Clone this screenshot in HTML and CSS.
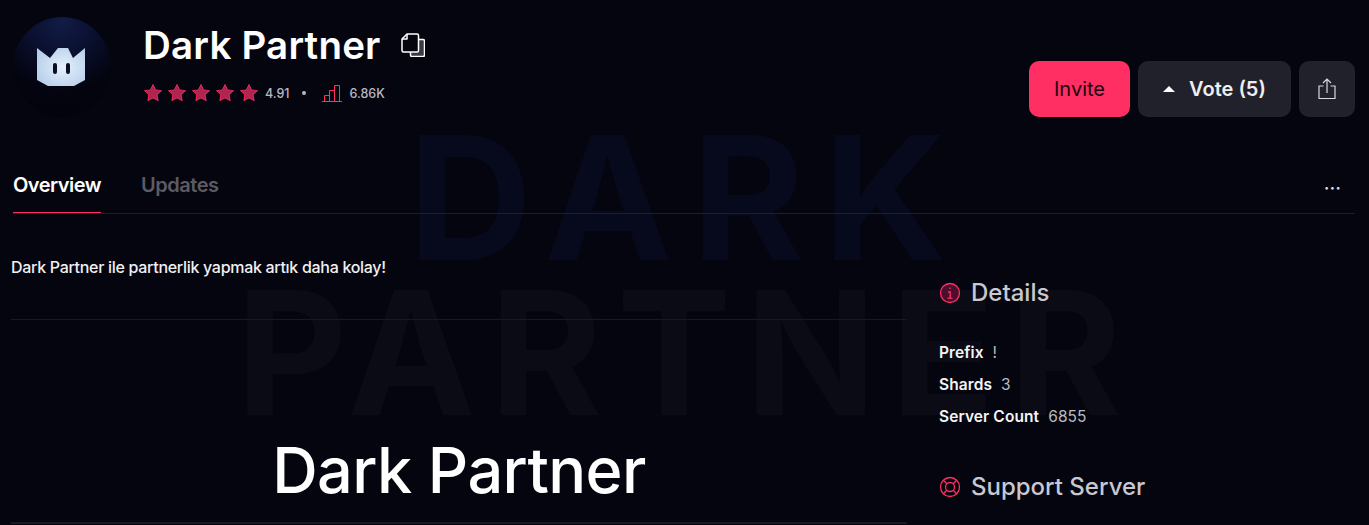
FILE: index.html
```html
<!DOCTYPE html>
<html lang="tr">
<head>
    <meta charset="UTF-8">
    <meta name="viewport" content="width=device-width, initial-scale=1.0">
    <title>Dark Partner</title>
    <link rel="stylesheet" href="styles.css">
</head>
<body>
    <!-- Background wordmark -->
    <div class="watermark">
        <div class="wm-dark">DARK</div>
        <div class="wm-partner">PARTNER</div>
    </div>

    <div class="page">
        <header class="head">
            <div class="avatar">
                <svg viewBox="0 0 98 100" width="98" height="100">
                    <defs>
                        <radialGradient id="crown" cx="55%" cy="50%" r="65%">
                            <stop offset="0" stop-color="#e6f0fc"/>
                            <stop offset="1" stop-color="#b4cdea"/>
                        </radialGradient>
                    </defs>
                    <path d="M24 31 L37 41 L45 31 L55 31 L60 41 L72 31 L72 63 L61 69 L35 69 L24 63 Z" fill="url(#crown)"/>
                    <rect x="40" y="46" width="4" height="11" rx="2" fill="#0b0e22"/>
                    <rect x="53" y="46" width="4" height="11" rx="2" fill="#0b0e22"/>
                </svg>
            </div>
            <div class="info">
                <div class="title-row">
                    <h1 class="title">Dark Partner</h1>
                    <svg class="copy" viewBox="0 0 24 24" width="24" height="24" fill="none" stroke="#fff" stroke-width="1.500" stroke-linejoin="round">
                        <path d="M9.500 6.500H22a1.500 1.500 0 0 1 1.500 1.500v14a1.500 1.500 0 0 1-1.500 1.500H11a1.500 1.500 0 0 1-1.500-1.500z" fill="#3a3a44"/>
                        <path d="M6 1h10a1.500 1.500 0 0 1 1.500 1.500v15a1.500 1.500 0 0 1-1.500 1.500H2.500A1.500 1.500 0 0 1 1 17.500V6z" fill="#05050f"/>
                        <path d="M6 1v5H1"/>
                    </svg>
                </div>
                <div class="stats">
                    <div class="stars">
                        <svg viewBox="0 0 20 20" width="20" height="20"><path class="star" d="M10 1.500l2.600 5.400 5.900.8-4.300 4.100 1 5.900-5.200-2.800-5.200 2.800 1-5.900L1.500 7.700l5.900-.8z"/></svg>
                        <svg viewBox="0 0 20 20" width="20" height="20"><path class="star" d="M10 1.500l2.600 5.400 5.900.8-4.300 4.100 1 5.900-5.200-2.800-5.200 2.800 1-5.900L1.500 7.700l5.900-.8z"/></svg>
                        <svg viewBox="0 0 20 20" width="20" height="20"><path class="star" d="M10 1.500l2.600 5.400 5.900.8-4.300 4.100 1 5.900-5.200-2.800-5.200 2.800 1-5.900L1.500 7.700l5.900-.8z"/></svg>
                        <svg viewBox="0 0 20 20" width="20" height="20"><path class="star" d="M10 1.500l2.600 5.400 5.900.8-4.300 4.100 1 5.900-5.200-2.800-5.200 2.800 1-5.900L1.500 7.700l5.900-.8z"/></svg>
                        <svg viewBox="0 0 20 20" width="20" height="20"><path class="star" d="M10 1.500l2.600 5.400 5.900.8-4.300 4.100 1 5.900-5.200-2.800-5.200 2.800 1-5.900L1.500 7.700l5.900-.8z"/></svg>
                    </div>
                    <span class="stat-num">4.91</span>
                    <span class="dot"></span>
                    <svg class="bars" viewBox="0 0 20 17" width="20" height="17" fill="none" stroke="#ff2e63" stroke-width="1">
                        <path d="M0 16.500h20M2.500 16V10.500h5V16M7.500 16V5.500h5V16M12.500 16V.5h5V16"/>
                    </svg>
                    <span class="stat-num stat-views">6.86K</span>
                </div>
            </div>
            <div class="actions">
                <button class="btn btn-invite">Invite</button>
                <button class="btn btn-vote"><span class="arrow"></span>Vote (5)</button>
                <button class="btn btn-share">
                    <svg viewBox="0 0 18 22" width="18" height="22" fill="none" stroke="#d8d8dc" stroke-width="1.200">
                        <path d="M5.500 8H1v12.500h16V8h-4.500M9 15V1.500M5 5l4-4 4 4"/>
                    </svg>
                </button>
            </div>
        </header>

        <nav class="tabs">
            <a class="tab active">Overview</a>
            <a class="tab">Updates</a>
            <span class="more">···</span>
        </nav>

        <div class="columns">
            <main class="main">
                <p class="desc">Dark Partner ile partnerlik yapmak artık daha kolay!</p>
                <hr class="rule">
                <h2 class="big">Dark Partner</h2>
                <hr class="rule rule-thick">
            </main>
            <aside class="side">
                <h3 class="side-head">
                    <svg viewBox="0 0 22 22" width="22" height="22" fill="#4a0f2c" stroke="#ff2e63" stroke-width="1.300">
                        <circle cx="11" cy="11" r="9.500"/>
                        <path d="M11 5.500v1.500M9 10h2.200v6M8.500 16.200h5" fill="none"/>
                    </svg>
                    Details
                </h3>
                <div class="kv"><b>Prefix</b><span>!</span></div>
                <div class="kv"><b>Shards</b><span>3</span></div>
                <div class="kv"><b>Server Count</b><span>6855</span></div>
                <h3 class="side-head side-support">
                    <svg viewBox="0 0 22 22" width="22" height="22" fill="none" stroke="#ff2e63" stroke-width="1.300">
                        <circle cx="11" cy="11" r="9.500"/>
                        <circle cx="11" cy="11" r="4.500"/>
                        <path d="M4.300 4.300l3.500 3.500M17.700 4.300l-3.500 3.500M4.300 17.700l3.500-3.500M17.700 17.700l-3.500-3.500"/>
                    </svg>
                    Support Server
                </h3>
            </aside>
        </div>
    </div>
</body>
</html>
```

FILE: styles.css
```css
html, body {
    height: 100%;
}
body {
    margin: 0;
    overflow: hidden;
    position: relative;
    background-color: #05050f;
    color: #fff;
    font-family: Inter, "Noto Sans", sans-serif;
}

/* Background wordmark */
.watermark {
    position: absolute;
    top: 0;
    left: 0;
    width: 100%;
    font-size: 172px;
    font-weight: 700;
    line-height: 1;
    white-space: nowrap;
    pointer-events: none;
}
.wm-dark {
    position: absolute;
    top: 111px;
    left: 408px;
    letter-spacing: 19px;
    color: #060a1c;
}
.wm-partner {
    position: absolute;
    top: 266px;
    left: 236px;
    letter-spacing: 14px;
    color: #0b0b16;
}

.page {
    position: relative;
    padding: 17px 14px 0 13px;
}

/* Header */
.head {
    display: flex;
    align-items: flex-start;
}
.avatar {
    width: 98px;
    height: 100px;
    border-radius: 50%;
    background: radial-gradient(circle at 50% 5%, #121c46 0%, #0a1030 30%, #03040f 65%, #010208 100%);
    flex-shrink: 0;
}
.avatar svg {
    display: block;
}
.info {
    margin-left: 32px;
    flex: 1;
}
.title-row {
    display: flex;
    align-items: center;
    height: 56px;
}
.title {
    margin: 0;
    font-size: 38.5px;
    font-weight: 600;
    letter-spacing: 0.2px;
}
.copy {
    margin-left: 20px;
}
.stats {
    display: flex;
    align-items: center;
    margin-top: 10px;
    height: 20px;
}
.stars {
    display: flex;
    gap: 4px;
}
.star {
    fill: #b02450;
    stroke: #ff2e63;
    stroke-width: 0.8;
    stroke-linejoin: round;
}
.stat-num {
    margin-left: 6px;
    font-size: 12.5px;
    font-weight: 500;
    color: #b9b9c0;
}
.stat-views {
    margin-left: 8px;
}
.dot {
    width: 4px;
    height: 4px;
    margin: 0 16px 0 12px;
    border-radius: 50%;
    background-color: #b9b9c0;
}
.actions {
    display: flex;
    gap: 8px;
    margin-top: 44px;
}
.btn {
    height: 56px;
    border: none;
    border-radius: 10px;
    font-family: inherit;
    font-size: 20px;
    cursor: pointer;
}
.btn-invite {
    width: 101px;
    background-color: #ff2e63;
    color: #1a0610;
}
.btn-vote {
    width: 153px;
    display: flex;
    align-items: center;
    justify-content: center;
    background-color: #21212c;
    color: #eeeef0;
    font-weight: 600;
}
.arrow {
    width: 0;
    height: 0;
    margin-right: 14px;
    border-left: 6px solid transparent;
    border-right: 6px solid transparent;
    border-bottom: 6px solid #fff;
}
.btn-share {
    width: 56px;
    display: flex;
    align-items: center;
    justify-content: center;
    background-color: #21212c;
}

/* Tabs */
.tabs {
    display: flex;
    align-items: stretch;
    gap: 40px;
    box-sizing: border-box;
    height: 64px;
    margin-top: 33px;
    padding-top: 15px;
    border-bottom: 1px solid #1f1f2b;
}
.tab {
    padding-top: 8px;
    font-size: 20px;
    font-weight: 600;
    letter-spacing: -0.5px;
    color: #5b5b66;
}
.tab.active {
    color: #fff;
    border-bottom: 1px solid #ff2e63;
}
.more {
    margin-left: auto;
    padding: 11px 14px 0 0;
    font-size: 20px;
    color: #e0e0e4;
}

/* Columns */
.columns {
    display: flex;
    margin-left: -2px;
}
.main {
    width: 896px;
}
.desc {
    margin: 42px 0 0;
    font-size: 16px;
    line-height: 22px;
    font-weight: 500;
    letter-spacing: -0.3px;
    color: #f0f0f2;
}
.rule {
    margin: 41px 0 0;
    border: none;
    border-top: 1px solid #191924;
}
.big {
    margin: 116px 0 0;
    font-size: 63px;
    font-weight: 500;
    line-height: 68px;
    text-align: center;
    letter-spacing: -0.6px;
}
.rule-thick {
    margin-top: 18px;
    border-top-width: 2px;
}
.side {
    margin-left: 32px;
    padding-top: 64px;
}
.side-head {
    display: flex;
    align-items: center;
    gap: 10px;
    margin: 0 0 28px;
    font-size: 24px;
    font-weight: 500;
    line-height: 30px;
    color: #c8c8ce;
}
.side-support {
    margin-top: 40px;
}
.kv {
    display: flex;
    gap: 9px;
    height: 32px;
    align-items: center;
    font-size: 15.5px;
    letter-spacing: 0.1px;
    color: #b9b9c0;
}
.kv b {
    font-weight: 600;
    color: #f4f4f6;
}
```
